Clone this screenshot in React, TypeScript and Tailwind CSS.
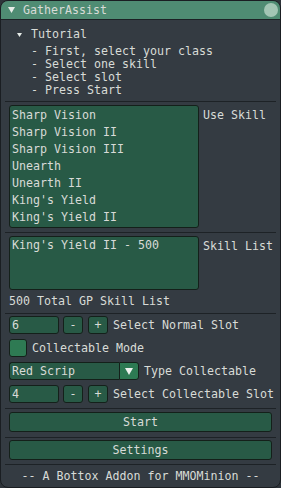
import React from "react";

function Sep() {
  return <div className="h-px bg-[#1d2226] -mx-[4px] shrink-0" />;
}

function Frame({ className = "", children }: { className?: string; children?: React.ReactNode }) {
  return (
    <div className={"border border-[#14201a] bg-[#285a46] rounded-[3px] shrink-0 " + className}>{children}</div>
  );
}

function SlotRow({ value, label }: { value: string; label: string }) {
  return (
    <div className="flex items-center h-[18px]">
      <Frame className="w-[50px] h-[18px] pl-[2px] flex items-center">{value}</Frame>
      <Frame className="ml-[4px] w-[20px] h-[18px] flex items-center justify-center">-</Frame>
      <Frame className="ml-[5px] w-[20px] h-[18px] flex items-center justify-center">+</Frame>
      <span className="ml-[5px] whitespace-nowrap">{label}</span>
    </div>
  );
}

export default function App() {
  const skills = [
    "Sharp Vision",
    "Sharp Vision II",
    "Sharp Vision III",
    "Unearth",
    "Unearth II",
    "King's Yield",
    "King's Yield II",
  ];
  return (
    <div className="w-[281px] h-[488px] bg-[#2e343a]">
      <div className="w-[281px] h-[488px] rounded-[8px] border border-[#1a1e22] bg-[#343b42] overflow-hidden flex flex-col text-[#d8dbd7] text-[11.63px] leading-[13px] font-['DejaVu_Sans_Mono','Liberation_Mono',sans-serif]">
        {/* Title bar */}
        <div className="h-[19px] shrink-0 bg-[#4f8c73] border-b border-[#1c2125] flex items-center pl-[7px] pr-[2px]">
          <svg width="7" height="6" viewBox="0 0 7 6" className="shrink-0">
            <polygon points="0,0 7,0 3.5,6" fill="#e6ece8" />
          </svg>
          <span className="ml-[8px] flex-1">GatherAssist</span>
          <div className="w-[14px] h-[14px] rounded-full bg-[#a3c6b5]" />
        </div>

        {/* Body */}
        <div className="flex flex-col px-[8px] pt-[8px]">
          <div className="flex items-center h-[13px] pl-[8px]">
            <svg width="5" height="4" viewBox="0 0 5 4" className="shrink-0">
              <polygon points="0,0 5,0 2.5,4" fill="#e6ece8" />
            </svg>
            <span className="ml-[9px]">Tutorial</span>
          </div>
          <div className="mt-[4px] pl-[22px] flex flex-col whitespace-pre">
            <div className="h-[13px]">- First, select your class</div>
            <div className="h-[13px]">- Select one skill</div>
            <div className="h-[13px]">- Select slot</div>
            <div className="h-[13px]">- Press Start</div>
          </div>

          <div className="mt-[4px]">
            <Sep />
          </div>

          <div className="mt-[3px] flex">
            <Frame className="w-[190px] h-[123px] pt-[1px] pl-[2px] overflow-hidden">
              {skills.map((s) => (
                <div key={s} className="h-[17px] leading-[17px] whitespace-pre">
                  {s}
                </div>
              ))}
            </Frame>
            <span className="ml-[4px] mt-[4px] whitespace-nowrap">Use Skill</span>
          </div>

          <div className="mt-[4px]">
            <Sep />
          </div>

          <div className="mt-[3px] flex">
            <Frame className="w-[190px] h-[54px] pl-[2px]">
              <div className="h-[17px] leading-[17px] whitespace-pre">King's Yield II - 500</div>
            </Frame>
            <span className="ml-[4px] mt-[4px] whitespace-nowrap">Skill List</span>
          </div>

          <div className="mt-[5px] h-[13px]">500 Total GP Skill List</div>

          <div className="mt-[5px]">
            <Sep />
          </div>

          <div className="mt-[2px] flex flex-col gap-[5px]">
            <SlotRow value="6" label="Select Normal Slot" />
            <div className="flex items-center h-[18px]">
              <div className="w-[18px] h-[18px] rounded-[3px] border border-[#14201a] bg-[#2e7a53]" />
              <span className="ml-[5px]">Collectable Mode</span>
            </div>
            <div className="flex items-center h-[18px]">
              <div className="flex w-[130px] h-[18px]">
                <div className="flex-1 h-[18px] border border-[#14201a] border-r-0 rounded-l-[3px] bg-[#285a46] pl-[2px] flex items-center">
                  Red Scrip
                </div>
                <div className="w-[20px] h-[18px] border border-[#14201a] rounded-r-[3px] bg-[#2d7a53] flex items-center justify-center">
                  <svg width="8" height="7" viewBox="0 0 8 7">
                    <polygon points="0,0 8,0 4,7" fill="#eef2ef" />
                  </svg>
                </div>
              </div>
              <span className="ml-[5px] whitespace-nowrap">Type Collectable</span>
            </div>
            <SlotRow value="4" label="Select Collectable Slot" />
          </div>

          <div className="mt-[5px]">
            <Sep />
          </div>

          <Frame className="mt-[3px] h-[20px] flex items-center justify-center">Start</Frame>

          <div className="mt-[5px]">
            <Sep />
          </div>

          <Frame className="mt-[2px] h-[20px] flex items-center justify-center">Settings</Frame>

          <div className="mt-[4px]">
            <Sep />
          </div>

          <div className="mt-[5px] h-[13px] text-center whitespace-pre">-- A Bottox Addon for MMOMinion --</div>
        </div>
      </div>
    </div>
  );
}
